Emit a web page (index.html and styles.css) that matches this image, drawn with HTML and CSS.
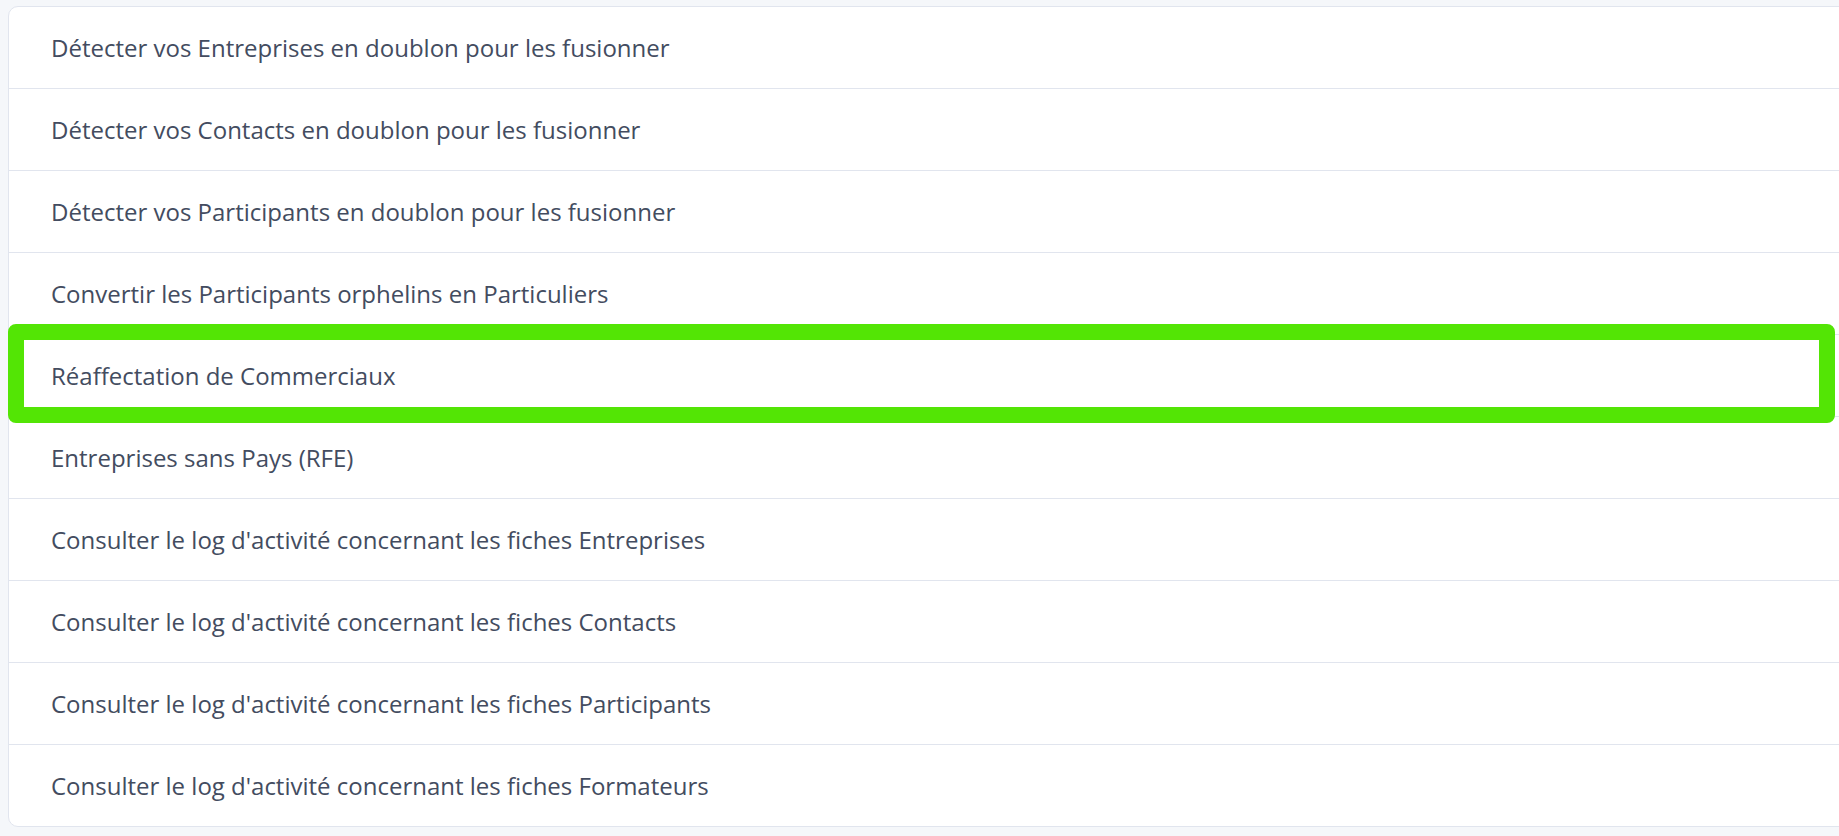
FILE: index.html
```html
<!DOCTYPE html>
<html lang="fr">
<head>
<meta charset="utf-8">
<title>Outils</title>
<link rel="stylesheet" href="styles.css">
</head>
<body>
<div class="card">
  <div class="row">Détecter vos Entreprises en doublon pour les fusionner</div>
  <div class="row">Détecter vos Contacts en doublon pour les fusionner</div>
  <div class="row">Détecter vos Participants en doublon pour les fusionner</div>
  <div class="row">Convertir les Participants orphelins en Particuliers</div>
  <div class="row highlighted">Réaffectation de Commerciaux<span class="mark"></span></div>
  <div class="row">Entreprises sans Pays (RFE)</div>
  <div class="row">Consulter le log d'activité concernant les fiches Entreprises</div>
  <div class="row">Consulter le log d'activité concernant les fiches Contacts</div>
  <div class="row">Consulter le log d'activité concernant les fiches Participants</div>
  <div class="row">Consulter le log d'activité concernant les fiches Formateurs</div>
</div>
</body>
</html>
```

FILE: styles.css
```css
html, body {
  margin: 0;
  padding: 0;
  background: #f5f7fa;
  overflow: hidden;
}
body {
  padding: 6px 0 0 8px;
  font-family: "Open Sans", "Noto Sans", sans-serif;
}
.card {
  background: #ffffff;
  border: 1px solid #e1e5ee;
  border-radius: 10px;
  margin-right: -30px;
}
.row {
  position: relative;
  height: 81px;
  display: flex;
  align-items: center;
  padding-left: 42px;
  font-size: 24px;
  color: #434c60;
  border-bottom: 1px solid #e1e5ee;
}
.row:last-child {
  border-bottom: none;
}
.mark {
  position: absolute;
  left: -1px;
  top: -11px;
  width: 1827px;
  height: 99px;
  box-sizing: border-box;
  border: 16px solid #53e505;
  border-radius: 8px;
  pointer-events: none;
}
```
